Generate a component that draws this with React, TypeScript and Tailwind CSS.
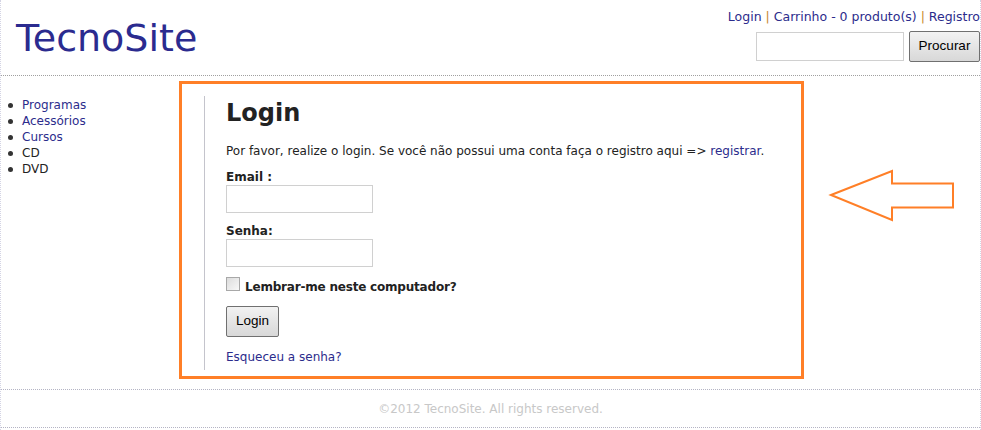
import React from "react";

const verdana = { fontFamily: '"DejaVu Sans", Verdana, sans-serif' };

export default function App() {
  return (
    <div className="relative w-[981px] h-[430px] bg-white overflow-hidden" style={verdana}>
      <div className="w-[981px] h-[430px] border-x border-dotted border-[#d4d4e4] flex flex-col">
        {/* Header */}
        <header className="h-[76px] border-b border-dotted border-[#a0a0a0] flex justify-between items-start shrink-0">
          <h1 className="pl-[15px] pt-[19px] text-[38px] leading-[38px] text-[#2b2b8f] font-normal">TecnoSite</h1>
          <div className="flex flex-col items-end pt-[9px]">
            <div className="text-[12.5px] leading-[16px] text-[#2c2c8c] whitespace-nowrap">
              <a>Login</a>
              <span className="text-[#c8862a]"> | </span>
              <a>Carrinho - 0 produto(s)</a>
              <span className="text-[#c8862a]"> | </span>
              <a>Registro</a>
            </div>
            <div className="flex items-center gap-[5px] mt-[6px]">
              <input className="w-[148px] h-[29px] border border-[#d0d0d0] bg-white outline-none" />
              <button
                className="w-[71px] h-[31px] border border-[#707070] rounded-[2px] bg-gradient-to-b from-[#f2f2f2] to-[#d8d8d8] text-[13.5px] text-black"
                style={{ fontFamily: '"Liberation Sans", Arial, sans-serif' }}
              >
                Procurar
              </button>
            </div>
          </div>
        </header>

        {/* Main */}
        <div className="flex h-[313px] shrink-0">
          <nav className="w-[203px] pt-[21px]">
            <ul className="text-[12px] leading-[16px]">
              {["Programas", "Acessórios", "Cursos", "CD", "DVD"].map((t, i) => (
                <li key={t} className="flex items-center">
                  <span className="ml-[7px] mr-[9px] w-[5px] h-[5px] rounded-full bg-[#333]" />
                  <span className={i < 3 ? "text-[#2c2c8c]" : "text-[#222]"}>{t}</span>
                </li>
              ))}
            </ul>
          </nav>
          <main className="mt-[20px] h-[274px] border-l border-[#c4c4cc] pl-[21px] pt-[3px] text-[#222]">
            <h2 className="text-[24px] leading-[28px] font-bold">Login</h2>
            <p className="mt-[16px] text-[12px] leading-[16px]">
              Por favor, realize o login. Se você não possui uma conta faça o registro aqui =&gt;{" "}
              <a className="text-[#2c2c8c]">registrar</a>.
            </p>
            <div className="mt-[11px] text-[12px] leading-[15px] font-bold">Email :</div>
            <input className="block w-[147px] h-[28px] border border-[#d0d0d0] bg-white outline-none" />
            <div className="mt-[11px] text-[12px] leading-[15px] font-bold">Senha:</div>
            <input className="block w-[147px] h-[28px] border border-[#d0d0d0] bg-white outline-none" />
            <div className="mt-[10px] flex items-start">
              <span className="w-[14px] h-[14px] border border-[#a8a8a8] bg-gradient-to-br from-[#dcdcdc] to-[#f8f8f8]" />
              <span className="ml-[5px] mt-[2px] text-[12px] leading-[16px] font-bold tracking-[-0.2px]">Lembrar-me neste computador?</span>
            </div>
            <button
              className="mt-[11px] block w-[53px] h-[31px] border border-[#707070] rounded-[2px] bg-gradient-to-b from-[#f2f2f2] to-[#d8d8d8] text-[13.5px] text-black"
              style={{ fontFamily: '"Liberation Sans", Arial, sans-serif' }}
            >
              Login
            </button>
            <a className="block mt-[12px] text-[12px] leading-[16px] text-[#2c2c8c]">Esqueceu a senha?</a>
          </main>
        </div>

        {/* Footer */}
        <footer className="h-[39px] border-t border-b border-dotted border-[#b4b4c4] shrink-0 pt-[11px] text-center text-[12px] leading-[16px] text-[#c8c8c8]">
          ©2012 TecnoSite. All rights reserved.
        </footer>
      </div>

      {/* Orange annotation box */}
      <div className="absolute left-[179px] top-[81px] w-[625px] h-[298px] border-[3px] border-[#ff7f27] pointer-events-none" />

      {/* Orange arrow */}
      <svg className="absolute left-[826px] top-[166px]" width="132" height="60" viewBox="826 166 132 60">
        <polygon
          points="831,195 892,171 892,183.5 953,183.5 953,207.5 892,207.5 892,220"
          fill="none"
          stroke="#ff7f27"
          strokeWidth="2"
        />
      </svg>
    </div>
  );
}
